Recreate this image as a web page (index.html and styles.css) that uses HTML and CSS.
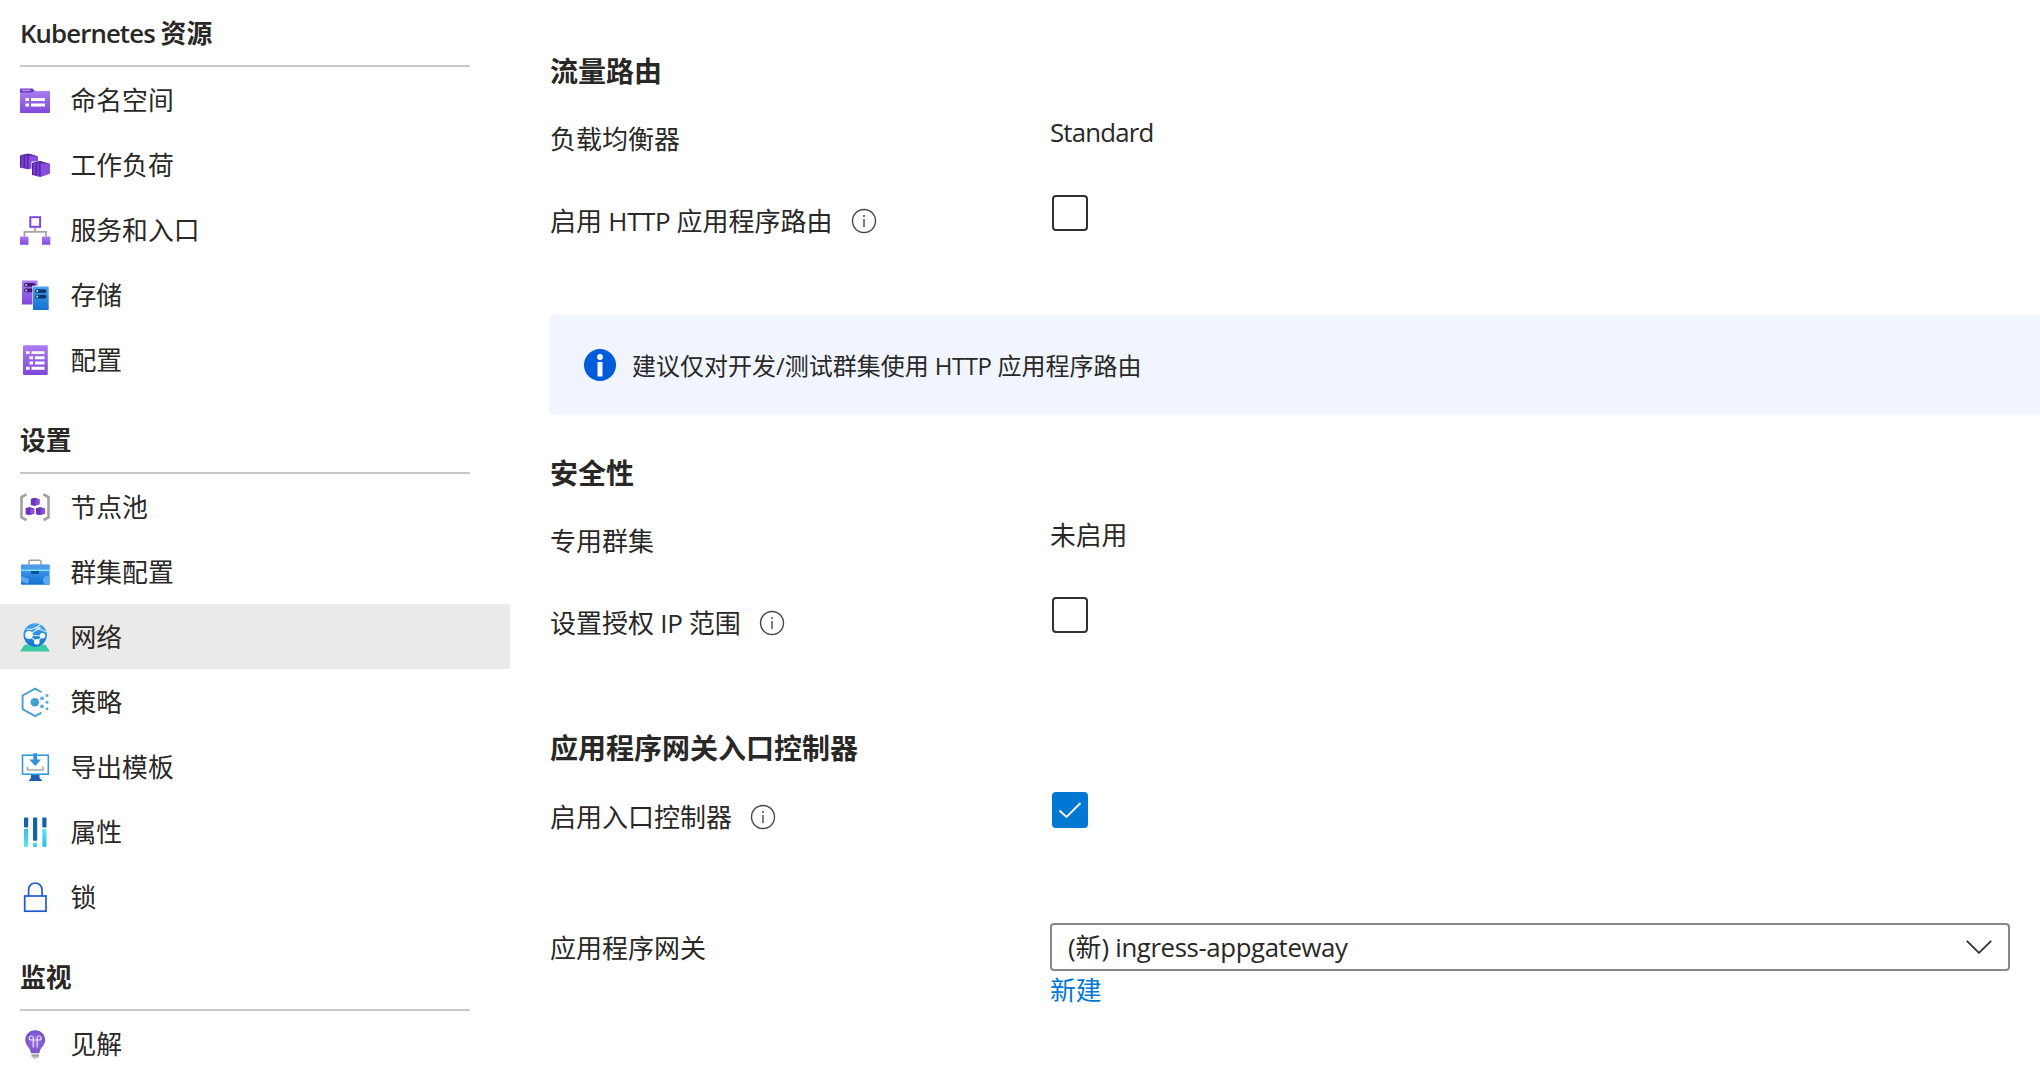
FILE: index.html
```html
<!DOCTYPE html>
<html lang="zh-CN">
<head>
<meta charset="utf-8">
<title>网络</title>
<link rel="stylesheet" href="styles.css">
</head>
<body>
<svg class="defs" width="0" height="0" aria-hidden="true">
  <defs>
    <linearGradient id="violet" x1="0" y1="0" x2="0" y2="1"><stop offset="0" stop-color="#ab7cf0"/><stop offset="1" stop-color="#7f48d9"/></linearGradient>
    <linearGradient id="azure" x1="0" y1="0" x2="0" y2="1"><stop offset="0" stop-color="#4aa3ee"/><stop offset="1" stop-color="#1470d2"/></linearGradient>
    <linearGradient id="cyan" x1="0" y1="0" x2="0" y2="1"><stop offset="0" stop-color="#5fe6f4"/><stop offset="1" stop-color="#32bedd"/></linearGradient>
    <linearGradient id="cyanUp" x1="0" y1="1" x2="0" y2="0"><stop offset="0" stop-color="#5fe6f4"/><stop offset="1" stop-color="#32bedd"/></linearGradient>
    <radialGradient id="bulb"><stop offset="0" stop-color="#a274ee"/><stop offset="1" stop-color="#7650c8"/></radialGradient>
    <symbol id="pod" viewBox="0 0 18 16">
      <path d="M0 2 8 0l10 3v9.500L8 16 0 14z" fill="#7a3fd0"/>
      <path d="M8 0l10 3v9.500L8 16z" fill="#8b4ce0"/>
      <path d="M.6 2v12M4.200 1.800v12.600M8 .8v14.400" stroke="#4f1f96" stroke-width="1.200" fill="none"/>
      <path d="M0 2 8 0l10 3-10-.8z" fill="#552f99"/>
    </symbol>
  </defs>
</svg>
<div class="page">
  <nav class="sidebar">
    <h2 class="group-title"><span class="latin-bold">Kubernetes </span>资源</h2>
    <a class="item"><svg class="icon" viewBox="0 0 30 30"><path d="M0 6h30v21.200a.8.8 0 0 1-.8.800H.8a.8.8 0 0 1-.8-.8z" fill="url(#violet)"/><path d="M0 7.500V4.300a.8.8 0 0 1 .8-.8h11.700l2.300 2.200-2.300 1.800z" fill="#6b3cc4"/><path d="M2 5.300h8" stroke="#c9a8f7" stroke-width="1.200"/><path d="M5.500 14.500h3.500M5.500 20h3.500M11 14.500h14M11 20h14" stroke="#fff" stroke-width="3"/></svg>命名空间</a>
    <a class="item"><svg class="icon" viewBox="0 0 30 30"><use href="#pod" x="0" y="3.500" width="18" height="16"/><path d="M11.500 11.500h11v9h-11z" fill="#fff"/><use href="#pod" x="12" y="11" width="18" height="16"/></svg>工作负荷</a>
    <a class="item"><svg class="icon" viewBox="0 0 30 30"><path d="M15 12v5M4.500 21.500v-4.700h21.500v4.700" fill="none" stroke="#a5a5a0" stroke-width="1.800"/><rect x="10.300" y="2.200" width="9.800" height="9.600" fill="#fff" stroke="#7f48d9" stroke-width="2"/><rect x="0" y="21.500" width="8.500" height="8.200" rx=".5" fill="url(#violet)"/><rect x="22" y="21.500" width="8.300" height="8.200" rx=".5" fill="url(#violet)"/></svg>服务和入口</a>
    <a class="item"><svg class="icon" viewBox="0 0 30 30"><rect x="2" y=".5" width="15.500" height="24" rx=".6" fill="url(#violet)"/><rect x="4" y="3" width="11.500" height="3.800" rx="1.900" fill="#3c1a78"/><rect x="4" y="8.500" width="11.500" height="3.800" rx="1.900" fill="#3c1a78"/><circle cx="6.200" cy="4.900" r="1" fill="#e6d7fa"/><circle cx="6.200" cy="10.400" r="1" fill="#e6d7fa"/><rect x="12.400" y="5.700" width="17" height="25" fill="#fff"/><rect x="13" y="6.500" width="15.700" height="23.500" rx=".6" fill="url(#azure)"/><rect x="15" y="9.200" width="11.500" height="3.800" rx="1.900" fill="#0b3868"/><rect x="15" y="14.700" width="11.500" height="3.800" rx="1.900" fill="#0b3868"/><circle cx="17.200" cy="11.100" r="1.100" fill="#8de6fb"/><circle cx="17.200" cy="16.600" r="1.100" fill="#8de6fb"/></svg>存储</a>
    <a class="item"><svg class="icon" viewBox="0 0 30 30"><rect x="3" y=".3" width="24.800" height="29.800" rx="1" fill="url(#violet)"/><path d="M6 7.600h3.600M11.500 7.600h13M9.500 12.800h3.600M15 12.800h9.500M9.500 18h3.600M15 18h9.500M6 23.200h3.600M11.500 23.200h13" stroke="#fff" stroke-width="2.900"/></svg>配置</a>

    <h2 class="group-title">设置</h2>
    <a class="item"><svg class="icon" viewBox="0 0 30 30"><path d="M6.500 2.300 1.500 5v20.500l5 2.500M23.500 2.300 28.500 5v20.500l-5 2.500" fill="none" stroke="#a0a0a0" stroke-width="2.600"/><use href="#pod" x="10.700" y="6" width="9" height="8"/><use href="#pod" x="5.500" y="15.200" width="9" height="8"/><use href="#pod" x="16" y="15.200" width="9" height="8"/></svg>节点池</a>
    <a class="item"><svg class="icon" viewBox="0 0 30 30"><path d="M9 8V4.600q0-1.400 1.400-1.400h9.200q1.400 0 1.400 1.400V8" fill="none" stroke="#9c9c9c" stroke-width="1.500"/><rect x="1" y="7.500" width="28.500" height="20.200" rx=".8" fill="url(#azure)"/><path d="M1 7.800h28.500v5H1z" fill="#4d9bea"/><path d="M1 13.300h28.500" stroke="#7de3fa" stroke-width="1.500"/><path d="M1 19l8.500 3-1.700 4.800L1 24.500zM29.500 18.500c-8-1-8 8-3.500 9.200h3.500z" fill="#5ba6f0"/><rect x="11" y="14" width="8" height="3" fill="#0b5394"/></svg>群集配置</a>
    <a class="item item-active"><svg class="icon" viewBox="0 0 30 30"><path d="M4 23.500q1-1 2.500-1h17q1.500 0 2.500 1l4 6H0z" fill="#38cba5"/><circle cx="15.200" cy="13" r="11.700" fill="url(#azure)"/><path d="M6 7q7 2 14.500-4.500M8 13 21 5.500M8 13l9 7M22.500 14l-6 6M8 13l14.500 1M15 7q7 0 11.300 3" fill="none" stroke="#c9e8fb" stroke-width="1.200"/><circle cx="9" cy="13" r="3.900" fill="#f3fbff"/><circle cx="22.500" cy="13.800" r="2.700" fill="#f3fbff"/><circle cx="16.800" cy="19.800" r="2.900" fill="#f3fbff"/><circle cx="18.500" cy="6" r="1.800" fill="#bfe3fa"/></svg>网络</a>
    <a class="item"><svg class="icon" viewBox="0 0 30 30"><path d="M21.500 5.200 15.200 1.600 2.600 8.500v13.600l12.600 7 6.300-3.500" fill="none" stroke="#4a9fce" stroke-width="1.900"/><circle cx="14.800" cy="15.200" r="4.300" fill="#3fa0d3"/><g fill="#5aabd6"><circle cx="22" cy="11.300" r="1.900"/><circle cx="22" cy="19.300" r="1.900"/><circle cx="27" cy="8.400" r="1.500"/><circle cx="27" cy="15.300" r="1.500"/><circle cx="27" cy="21.800" r="1.500"/></g></svg>策略</a>
    <a class="item"><svg class="icon" viewBox="0 0 30 30"><path d="M11 22.500h8.500v3.200L22.500 29h-14l2.500-3.300z" fill="#1d5fae"/><rect x="2.500" y="3.200" width="25.800" height="19" fill="#fff" stroke="#2f9be3" stroke-width="1.600"/><path d="M7.500 14.500V18h15.500v-3.500" fill="none" stroke="#a8a8a8" stroke-width="1.600"/><path d="M13.300 1.200h3.800v6.300h4l-5.900 6.600-5.900-6.600h4z" fill="#3690e2"/></svg>导出模板</a>
    <a class="item"><svg class="icon" viewBox="0 0 30 30"><rect x="4" y=".4" width="4.200" height="10" rx="1" fill="#1263ad"/><rect x="4" y="12" width="4.200" height="18" rx="1" fill="url(#cyanUp)"/><rect x="13" y=".4" width="4.200" height="23.400" rx="1" fill="#1263ad"/><rect x="13" y="25.400" width="4.200" height="4.700" rx="1" fill="url(#cyan)"/><rect x="22.300" y=".4" width="4.200" height="10" rx="1" fill="#1263ad"/><rect x="22.300" y="12" width="4.200" height="18" rx="1" fill="url(#cyan)"/></svg>属性</a>
    <a class="item"><svg class="icon" viewBox="0 0 30 30"><rect x="4.700" y="14" width="21.300" height="15.200" fill="#fff" stroke="#1f5bd0" stroke-width="1.700"/><path d="M8.600 14V7.700a6.700 6.700 0 0 1 13.400 0V14" fill="none" stroke="#1f5bd0" stroke-width="1.700"/></svg>锁</a>

    <h2 class="group-title">监视</h2>
    <a class="item"><svg class="icon" viewBox="0 0 30 30"><path d="M15.200 1.200c6 0 9.900 4.500 9.900 9.800 0 6-5.200 7.200-5.600 13h-8.600C10.500 18.200 5.300 17 5.300 11c0-5.300 3.900-9.800 9.900-9.800z" fill="url(#bulb)"/><path d="M13.200 18.500V9a2 2 0 1 0-2 2h8a2 2 0 1 0-2-2v9.500" fill="none" stroke="#ecdffc" stroke-width="1.200"/><path d="M11.500 24.500h7.500v3l-2 2h-3.500l-2-2z" fill="#bcbcbc"/><path d="M11.500 26.700h7.500" stroke="#8d8d8d" stroke-width=".8"/></svg>见解</a>
  </nav>

  <main class="content">
    <section class="section">
      <h3 class="title">流量路由</h3>
      <div class="row">
        <div class="label">负载均衡器</div>
        <div class="value"><span class="latin">Standard</span></div>
      </div>
      <div class="row">
        <div class="label">启用<span class="latin-inline"> HTTP </span>应用程序路由<svg class="info" viewBox="0 0 26 26"><circle cx="13" cy="13" r="11.500"/><path d="M13 11v8M13 7v2"/></svg></div>
        <div class="value"><span class="checkbox"></span></div>
      </div>
    </section>

    <div class="banner">
      <svg class="banner-icon" viewBox="0 0 32 32"><circle cx="16" cy="16" r="16" fill="#015cda"/><circle cx="16" cy="8" r="2.900" fill="#fff"/><path d="M13.500 13h5v14.500h-5z" fill="#fff"/></svg>
      <span class="banner-text">建议仅对开发/测试群集使用<span class="latin-inline"> HTTP </span>应用程序路由</span>
    </div>

    <section class="section section-security">
      <h3 class="title">安全性</h3>
      <div class="row">
        <div class="label">专用群集</div>
        <div class="value">未启用</div>
      </div>
      <div class="row">
        <div class="label">设置授权<span class="latin-inline"> IP </span>范围<svg class="info" viewBox="0 0 26 26"><circle cx="13" cy="13" r="11.500"/><path d="M13 11v8M13 7v2"/></svg></div>
        <div class="value"><span class="checkbox"></span></div>
      </div>
    </section>

    <section class="section section-ingress">
      <h3 class="title">应用程序网关入口控制器</h3>
      <div class="row row-tall">
        <div class="label">启用入口控制器<svg class="info" viewBox="0 0 26 26"><circle cx="13" cy="13" r="11.500"/><path d="M13 11v8M13 7v2"/></svg></div>
        <div class="value"><span class="checkbox checkbox-on"><svg viewBox="0 0 36 36"><path d="m7.500 18.500 7 6.500L28.500 11"/></svg></span></div>
      </div>
      <div class="row row-gateway">
        <div class="label">应用程序网关</div>
        <div class="value">
          <div class="select"><span>(新)<span class="latin-select"> ingress-appgateway</span></span><svg class="chevron" viewBox="0 0 26 14"><path d="m.8.8 12.200 12L25.200.8"/></svg></div>
          <a class="link">新建</a>
        </div>
      </div>
    </section>
  </main>
</div>
</body>
</html>
```
FILE: styles.css
```css
* { box-sizing: border-box; }

body {
  margin: 0;
  background: #fff;
  color: #292827;
  font: 25.8px/36px "Open Sans", "Noto Sans CJK SC", sans-serif;
  overflow: hidden;
}

.defs { display: block; }

.page { display: flex; height: 1069px; overflow: hidden; }

.sidebar { width: 510px; flex: none; margin-top: -15px; }

.group-title {
  height: 82px;
  margin: 0 40px 0 20px;
  padding-top: 30px;
  border-bottom: 2px solid #c8c8c8;
  font-size: 25.8px;
  font-weight: 600;
  white-space: pre;
}

.item { display: flex; align-items: center; height: 65px; padding-left: 20px; gap: 20.5px; }
.item-active { background: #ebeae9; }

.icon { width: 30px; height: 30px; flex: none; overflow: visible; }

.content { flex: 1; min-width: 0; padding: 53px 0 0 40px; }

.section { height: 262px; }
.section-security { padding-top: 40px; height: 315px; }
.section-ingress { height: 300px; }

.title { margin: 0; height: 62px; font-size: 28px; font-weight: 600; }

.row { display: grid; grid-template-columns: 500px 960px; height: 80px; }
.row-tall { height: 131px; }

.label { display: flex; align-items: center; height: 46px; padding-top: 1px; font-size: 26px; white-space: pre; }
.row + .row .label { margin-top: 2px; }
.row-tall .label { padding-top: 4px; }
.row + .row-gateway .label { margin-top: 1px; }

.value { display: flex; flex-direction: column; }

.latin { margin-top: -1px; letter-spacing: -0.8px; }
.latin-inline { letter-spacing: -0.4px; }
.latin-select { letter-spacing: -0.4px; white-space: pre; }
.latin-bold { letter-spacing: -0.9px; }

.info { width: 26px; height: 26px; margin-left: 18px; fill: none; stroke: #494847; stroke-width: 1.4; }

.checkbox { width: 36px; height: 36px; margin-left: 2px; border: 2px solid #323130; border-radius: 4px; }
.checkbox-on { border: 0; background: #0078d4; }
.checkbox-on svg { display: block; fill: none; stroke: #fff; stroke-width: 1.8; }

.banner {
  display: flex;
  align-items: center;
  gap: 16px;
  height: 100px;
  padding-left: 34px;
  border-radius: 4px 0 0 4px;
  background: #f0f5ff;
  font-size: 24px;
  white-space: pre;
}
.banner-icon { width: 32px; height: 32px; flex: none; }
.banner-text { padding-top: 2px; }

.select {
  display: flex;
  align-items: center;
  justify-content: space-between;
  height: 48px;
  padding: 0 16px;
  border: 2px solid #8a8886;
  border-radius: 4px;
}
.chevron { width: 26px; height: 14px; fill: none; stroke: #323130; stroke-width: 1.8; }

.link { padding-top: 1px; color: #0078d4; }
```
